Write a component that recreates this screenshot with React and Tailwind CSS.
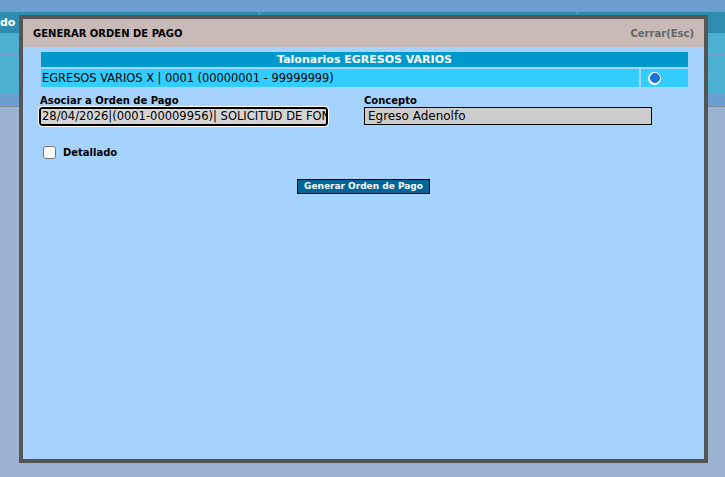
import React from 'react';

const font = { fontFamily: '"DejaVu Sans", Verdana, sans-serif' };

const App = () => {
  return (
    <div className="relative w-[725px] h-[477px] overflow-hidden bg-[#9ab3d1]" style={font}>
      {/* Page behind the overlay */}
      <div className="h-[12px] bg-[#6b9fd1]" />
      <div className="h-[21px] bg-[#2e8cb0] flex">
        <div className="w-[260px] border-r border-[#5aa6c8] text-white font-bold text-[11px] leading-[21px]">do</div>
        <div className="w-[318px] border-r border-[#5aa6c8]" />
      </div>
      <div className="h-[22px] bg-[#4bb0d1] border-b border-[#7d9fd3]" />
      <div className="h-[23px] bg-[#4bb0d1] border-b border-[#7d9fd3]" />
      <div className="h-[16px] bg-[#4bb0d1]" />
      <div className="h-[13px] bg-[#6c9fd1] border-b border-[#7b8a9c]" />

      {/* Modal */}
      <div className="absolute left-[19px] top-[15px] w-[689px] h-[448px] border-4 border-[#555555] bg-[#a6d2fe] flex flex-col">
        <div className="h-[28px] bg-[#c8bab6] flex items-center justify-between pl-[10px] pr-[10px] shrink-0">
          <span className="text-[10px] font-bold text-black">GENERAR ORDEN DE PAGO</span>
          <span className="text-[10px] font-bold text-[#666666]">Cerrar(Esc)</span>
        </div>

        <div className="pt-[5px] pl-[18px] pr-[16px]">
          <div className="h-[15px] bg-[#0099cc] text-white font-bold text-[11px] leading-[15px] text-center">
            Talonarios EGRESOS VARIOS
          </div>
          <div className="mt-[2px] h-[18px] flex gap-[2px]">
            <div className="flex-1 bg-[#33ccff] text-[11.4px] leading-[18px] text-black pl-[1px]">
              EGRESOS VARIOS X | 0001 (00000001 - 99999999)
            </div>
            <div className="w-[47px] bg-[#33ccff] flex items-center pl-[7px]">
              <span className="w-[13px] h-[13px] rounded-full bg-white flex items-center justify-center">
                <span className="w-[10px] h-[10px] rounded-full bg-[#1a73d9] border border-[#1565c0]" />
              </span>
            </div>
          </div>
        </div>

        <div className="flex pl-[16px] mt-[7px]">
          <div className="w-[325px]">
            <div className="text-[10px] font-bold leading-[13px] pl-[1px] text-black">Asociar a Orden de Pago</div>
            <div className="w-[289px] h-[19px] rounded-[3px] border-2 border-black bg-[#d4d4d4] outline outline-1 outline-white text-[11.5px] leading-[15px] pl-[1px] overflow-hidden whitespace-nowrap text-black">
              28/04/2026|(0001-00009956)| SOLICITUD DE FONDOS
            </div>
          </div>
          <div>
            <div className="text-[10px] font-bold leading-[13px] text-black">Concepto</div>
            <div className="w-[288px] h-[18px] border border-black bg-[#cccccc] text-[12px] leading-[16px] pl-[3px] text-black">
              Egreso Adenolfo
            </div>
          </div>
        </div>

        <div className="flex items-center pl-[20px] mt-[19px]">
          <span className="w-[13px] h-[13px] rounded-[3px] bg-white border border-[#767676]" />
          <span className="ml-[7px] text-[10px] font-bold text-black">Detallado</span>
        </div>

        <div className="flex justify-center mt-[19px]">
          <button className="h-[15px] px-[6px] bg-[#006699] border border-black text-white font-bold text-[9px] leading-[13px]">
            Generar Orden de Pago
          </button>
        </div>
      </div>
    </div>
  );
};

export default App;
